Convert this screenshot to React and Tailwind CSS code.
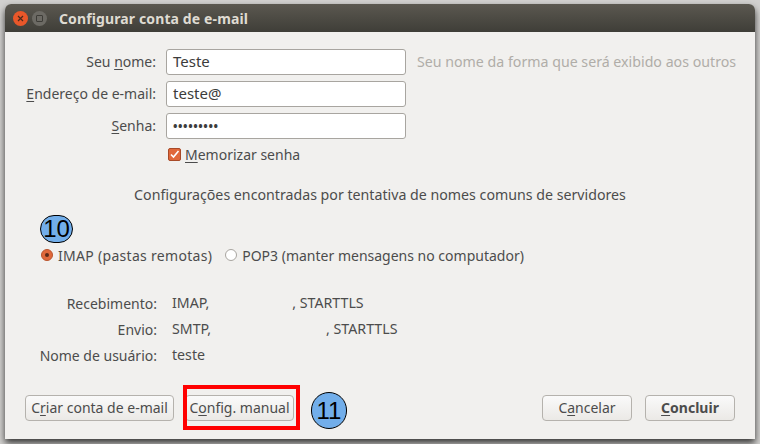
const FONT = { fontFamily: '"Noto Sans", sans-serif' }

function Mn({ children }) {
  return <span className="underline underline-offset-2">{children}</span>
}

function Field({ label, value }) {
  return (
    <>
      <div className="text-right pr-[10px] leading-[26px] whitespace-nowrap text-[14px]">{label}</div>
      <div className="h-[26px] w-[240px] bg-white border border-[#a8a5a0] rounded-[3px] pl-[6px] leading-[23px] text-[15px] text-[#3c3c3c]">
        {value}
      </div>
    </>
  )
}

function Btn({ children, className = '' }) {
  return (
    <button className={`h-[26px] rounded-[4px] border border-[#b5b2ad] bg-gradient-to-b from-[#fafafa] to-[#ebe9e6] text-[14px] text-[#4c4c4c] leading-none ${className}`}>
      {children}
    </button>
  )
}

function Badge({ children, className = '' }) {
  return (
    <div className={`absolute rounded-full bg-[#72aeea] border border-black flex items-center justify-center text-black text-[24px] ${className}`} style={{ fontFamily: '"Liberation Sans", sans-serif' }}>
      {children}
    </div>
  )
}

export default function App() {
  return (
    <div className="w-[760px] h-[444px] bg-[#d2d1cf] overflow-hidden pt-[4px] pl-[5px]" style={FONT}>
      <div className="relative w-[750px] h-[435px] flex flex-col rounded-t-[6px] shadow-[0_4px_7px_rgba(0,0,0,0.75)] bg-[#f1f0ee] text-[14.2px] text-[#4c4c4c]">
        {/* title bar */}
        <div className="h-[28px] shrink-0 flex items-center rounded-t-[6px] bg-gradient-to-b from-[#5b5850] to-[#3f3e38] pl-[8px]">
          <div className="w-[15px] h-[15px] rounded-full bg-[#e9572a] flex items-center justify-center">
            <svg width="7" height="7" viewBox="0 0 7 7"><path d="M1 1l5 5M6 1L1 6" stroke="#4a2a1c" strokeWidth="1.2" /></svg>
          </div>
          <div className="w-[15px] h-[15px] rounded-full bg-[#6c6a64] ml-[4px] flex items-center justify-center">
            <div className="w-[7px] h-[7px] border border-[#3d3c37] rounded-[1px]" />
          </div>
          <div className="ml-[12px] text-[14px] font-bold text-[#dfdbd2] tracking-[0.12px]">Configurar conta de e-mail</div>
        </div>

        <div className="flex-1 flex flex-col pt-[17px]">
          <div className="grid grid-cols-[161px_240px_1fr] gap-y-[6px] items-center">
            <Field label={<>Seu <Mn>n</Mn>ome:</>} value="Teste" />
            <div className="pl-[11px] text-[#b0ada8] whitespace-nowrap">Seu nome da forma que será exibido aos outros</div>
            <Field label={<><Mn>E</Mn>ndereço de e-mail:</>} value="teste@" />
            <div />
            <Field label={<><Mn>S</Mn>enha:</>} value={<span className="text-[12px] tracking-[0.55px] font-bold">•••••••••</span>} />
            <div />
          </div>

          <div className="flex items-center ml-[163px] mt-[5px] h-[20px]">
            <div className="w-[13px] h-[13px] rounded-[2px] bg-[#e0683a] border border-[#a84a28] flex items-center justify-center">
              <svg width="11" height="11" viewBox="0 0 11 11"><path d="M2 5.5l2.5 2.5L9.5 2" stroke="#fff" strokeWidth="1.6" fill="none" /></svg>
            </div>
            <span className="ml-[4px] text-[14px]"><Mn>M</Mn>emorizar senha</span>
          </div>

          <div className="text-center mt-[21px] leading-[20px]">Configurações encontradas por tentativa de nomes comuns de servidores</div>

          <div className="flex items-center ml-[36px] mt-[40px] h-[20px] text-[14px]">
            <div className="w-[12px] h-[12px] rounded-full bg-[#e0683a] border border-[#b9542d] flex items-center justify-center">
              <div className="w-[4px] h-[4px] rounded-full bg-[#5a2a18]" />
            </div>
            <span className="ml-[5px] tracking-[0.3px]">IMAP (pastas remotas)</span>
            <div className="w-[12px] h-[12px] rounded-full bg-white border border-[#a8a5a0] ml-[13px]" />
            <span className="ml-[5px]">POP3 (manter mensagens no computador)</span>
          </div>

          <div className="grid grid-cols-[152px_1fr] auto-rows-[26px] items-center mt-[25px]">
            <div className="text-right text-[14px]">Recebimento:</div>
            <div className="pl-[15px] whitespace-pre">IMAP,<span className="inline-block w-[83px]" />, STARTTLS</div>
            <div className="text-right text-[14px]">Envio:</div>
            <div className="pl-[15px] whitespace-pre">SMTP,<span className="inline-block w-[115px]" />, STARTTLS</div>
            <div className="text-right text-[14px]">Nome de usuário:</div>
            <div className="pl-[15px]">teste</div>
          </div>

          <div className="flex items-center mt-[27px] px-[20px]">
            <Btn className="w-[149px]">C<Mn>r</Mn>iar conta de e-mail</Btn>
            <Btn className="w-[109px] ml-[11px]">C<Mn>o</Mn>nfig. manual</Btn>
            <Btn className="w-[90px] ml-auto">C<Mn>a</Mn>ncelar</Btn>
            <Btn className="w-[90px] ml-[13px] font-bold"><Mn>C</Mn>oncluir</Btn>
          </div>
        </div>

        <Badge className="left-[35px] top-[211px] w-[33px] h-[28px]">10</Badge>
        <Badge className="left-[306px] top-[388px] w-[36px] h-[37px]">11</Badge>
        <div className="absolute left-[178px] top-[381px] w-[117px] h-[45px] border-[4px] border-[#ff0000]" />
      </div>
    </div>
  )
}
